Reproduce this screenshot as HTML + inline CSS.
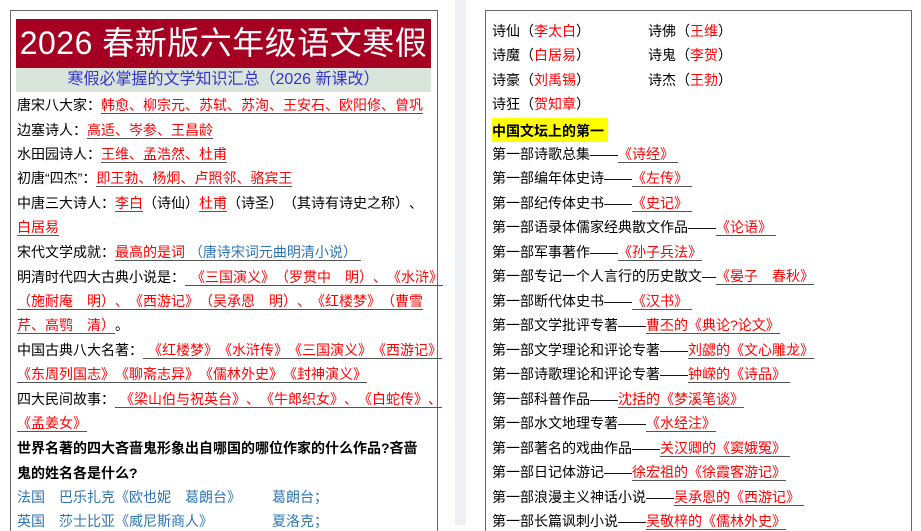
<!DOCTYPE html>
<html><head><meta charset="utf-8"><style>
body{margin:0;width:921px;height:525px;overflow:hidden;background:#fff;position:relative;font-family:"Liberation Sans","Noto Sans CJK SC",sans-serif;font-size:14px;color:#000;text-spacing-trim:space-all}
.pg{position:absolute;border:1.5px solid #6a6a6a;border-bottom:none;background:#fff}
.l{position:absolute;white-space:nowrap;line-height:18px;height:18px}
.r{color:#f00}
.u{border-bottom:1.5px solid #555;padding-bottom:0}
.b{color:#2e75b6}
.bd{font-weight:bold}
</style></head><body>
<div style="position:absolute;left:455px;top:0;width:11px;height:525px;background:#eef0f4"></div>
<div class="pg" style="left:10px;top:10px;width:426px;height:520px"></div>
<div class="pg" style="left:485px;top:10px;width:425px;height:520px"></div>
<div style="position:absolute;left:16px;top:19px;width:415px;height:49px;background:#a50021;color:#fff;font-size:32px;line-height:49px;text-align:center;white-space:nowrap;letter-spacing:0.5px">2026 春新版六年级语文寒假</div>
<div style="position:absolute;left:16px;top:68px;width:415px;height:24px;background:#d8e4dc;color:#3535c8;font-size:16px;line-height:24px;text-align:center;white-space:nowrap">寒假必掌握的文学知识汇总（2026 新课改）</div>

<div class="l" style="left:17px;top:96px">唐宋八大家：<span class="r u">韩愈、柳宗元、苏轼、苏洵、王安石、欧阳修、曾巩</span></div>
<div class="l" style="left:17px;top:121px">边塞诗人：<span class="r u">高适、岑参、王昌龄</span></div>
<div class="l" style="left:17px;top:145px">水田园诗人：<span class="r u">王维、孟浩然、杜甫</span></div>
<div class="l" style="left:17px;top:169px">初唐“四杰”：<span class="r u">即王勃、杨炯、卢照邻、骆宾王</span></div>
<div class="l" style="left:17px;top:194px">中唐三大诗人：<span class="r u">李白</span>（诗仙）<span class="r u">杜甫</span>（诗圣）（其诗有诗史之称）、</div>
<div class="l" style="left:17px;top:218px"><span class="r u">白居易</span></div>
<div class="l" style="left:17px;top:243px">宋代文学成就：<span class="u"><span class="r">最高的是词 </span><span class="b"> （唐诗宋词元曲明清小说）&nbsp;</span></span></div>
<div class="l" style="left:17px;top:268px">明清时代四大古典小说是：<span class="r u" style="padding-left:6px">《三国演义》（罗贯中　明）、《水浒》</span></div>
<div class="l" style="left:17px;top:292px"><span class="r u">（施耐庵　明）、《西游记》（吴承恩　明）、《红楼梦》（曹雪</span></div>
<div class="l" style="left:17px;top:316px"><span class="r u">芹、高鹗　清）</span>。</div>
<div class="l" style="left:17px;top:341px">中国古典八大名著：<span class="r u" style="padding-left:5px">《红楼梦》《水浒传》《三国演义》《西游记》</span></div>
<div class="l" style="left:17px;top:365px"><span class="r u">《东周列国志》《聊斋志异》《儒林外史》《封神演义》</span></div>
<div class="l" style="left:17px;top:390px">四大民间故事：<span class="r u" style="padding-left:5px">《梁山伯与祝英台》、《牛郎织女》、《白蛇传》、</span></div>
<div class="l" style="left:17px;top:414px"><span class="r u">《孟姜女》</span></div>
<div class="l bd" style="left:17px;top:439px">世界名著的四大吝啬鬼形象出自哪国的哪位作家的什么作品?吝啬</div>
<div class="l bd" style="left:17px;top:464px">鬼的姓名各是什么?</div>
<div class="l b" style="left:17px;top:488px">法国　巴乐扎克《欧也妮　葛朗台》</div>
<div class="l b" style="left:272px;top:488px">葛朗台；</div>
<div class="l b" style="left:17px;top:512px">英国　莎士比亚《威尼斯商人》</div>
<div class="l b" style="left:272px;top:512px">夏洛克；</div>

<div class="l" style="left:492px;top:22px">诗仙（<span class="r">李太白</span>）</div>
<div class="l" style="left:648px;top:22px">诗佛（<span class="r">王维</span>）</div>
<div class="l" style="left:492px;top:46px">诗魔（<span class="r">白居易</span>）</div>
<div class="l" style="left:648px;top:46px">诗鬼（<span class="r">李贺</span>）</div>
<div class="l" style="left:492px;top:71px">诗豪（<span class="r">刘禹锡</span>）</div>
<div class="l" style="left:648px;top:71px">诗杰（<span class="r">王勃</span>）</div>
<div class="l" style="left:492px;top:95px">诗狂（<span class="r">贺知章</span>）</div>
<div class="l bd" style="left:492px;top:118px;height:24px;line-height:26px;background:#ff0;padding-right:4px">中国文坛上的第一</div>
<div class="l" style="left:492px;top:145px">第一部诗歌总集——<span class="r u">《诗经》&nbsp;</span></div>
<div class="l" style="left:492px;top:169px">第一部编年体史诗——<span class="r u">《左传》&nbsp;</span></div>
<div class="l" style="left:492px;top:194px">第一部纪传体史书——<span class="r u">《史记》&nbsp;</span></div>
<div class="l" style="left:492px;top:218px">第一部语录体儒家经典散文作品——<span class="r u">《论语》&nbsp;</span></div>
<div class="l" style="left:492px;top:243px">第一部军事著作——<span class="r u">《孙子兵法》</span></div>
<div class="l" style="left:492px;top:267px">第一部专记一个人言行的历史散文—<span class="r u">《晏子　春秋》</span></div>
<div class="l" style="left:492px;top:292px">第一部断代体史书——<span class="r u">《汉书》&nbsp;</span></div>
<div class="l" style="left:492px;top:316px">第一部文学批评专著——<span class="r u">曹丕的《典论?论文》</span></div>
<div class="l" style="left:492px;top:341px">第一部文学理论和评论专著——<span class="r u">刘勰的《文心雕龙》</span></div>
<div class="l" style="left:492px;top:365px">第一部诗歌理论和评论专著——<span class="r u">钟嵘的《诗品》&nbsp;</span></div>
<div class="l" style="left:492px;top:390px">第一部科普作品——<span class="r u">沈括的《梦溪笔谈》</span></div>
<div class="l" style="left:492px;top:414px">第一部水文地理专著——<span class="r u">《水经注》</span></div>
<div class="l" style="left:492px;top:439px">第一部著名的戏曲作品——<span class="r u">关汉卿的《窦娥冤》&nbsp;</span></div>
<div class="l" style="left:492px;top:463px">第一部日记体游记——<span class="r u">徐宏祖的《徐霞客游记》</span></div>
<div class="l" style="left:492px;top:488px">第一部浪漫主义神话小说——<span class="r u">吴承恩的《西游记》&nbsp;</span></div>
<div class="l" style="left:492px;top:512px">第一部长篇讽刺小说——<span class="r u">吴敬梓的《儒林外史》</span></div>
</body></html>
